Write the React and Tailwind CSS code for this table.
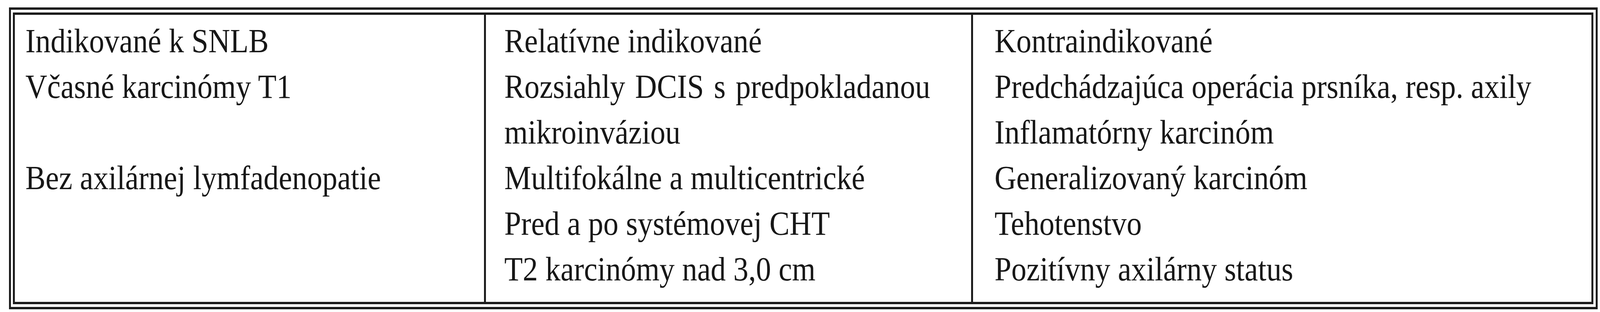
import React from "react";

// reference was drawn for a 4608px wide page; horizontal sizes are in vw so the
// table keeps its proportions at whatever width the window really has
const columns = [
  {
    width: "w-[29.318vw] shrink-0",
    pad: "pl-[0.651vw]",
    lines: ["Indikované k SNLB", "Včasné karcinómy T1", "", "Bez axilárnej lymfadenopatie"],
  },
  {
    width: "w-[30.425vw] shrink-0 border-l-[0.1302vw] border-[#1c1c1c]",
    pad: "pl-[1.15vw]",
    lines: [
      "Relatívne indikované",
      { text: "Rozsiahly DCIS s predpokladanou", justified: true },
      "mikroinváziou",
      "Multifokálne a multicentrické",
      "Pred a po systémovej CHT",
      "T2 karcinómy nad 3,0 cm",
    ],
  },
  {
    width: "flex-1 border-l-[0.1302vw] border-[#1c1c1c]",
    pad: "pl-[1.367vw]",
    lines: [
      "Kontraindikované",
      "Predchádzajúca operácia prsníka, resp. axily",
      "Inflamatórny karcinóm",
      "Generalizovaný karcinóm",
      "Tehotenstvo",
      "Pozitívny axilárny status",
    ],
  },
];

export default function App() {
  const fx = typeof window !== "undefined" ? Math.min(1, window.innerWidth / 4608) : 1;

  return (
    <div className="w-full h-[800px] bg-white pt-[19px] pl-[0.5642vw] pr-[0.1519vw] overflow-hidden">
      <div className="h-[774px] border-y-[6px] border-x-[0.1302vw] border-[#1c1c1c] py-[7px] pl-[0.1302vw] pr-[0.1519vw]">
        <div className="h-full border-y-[6px] border-x-[0.1302vw] border-[#1c1c1c] flex">
          {columns.map((col, i) => (
            <div key={i} className={`${col.width} h-full pt-[8px] ${col.pad} overflow-hidden`}>
              {col.lines.map((line, j) => {
                const text = typeof line === "string" ? line : line.text;
                const justified = typeof line !== "string" && line.justified;
                return (
                  <div
                    key={j}
                    className={`h-[117px] whitespace-nowrap text-[87px] leading-[117px] text-[#171717] origin-left ${
                      justified ? "[word-spacing:7px]" : ""
                    }`}
                    style={{
                      fontFamily: '"Liberation Serif", "Times New Roman", serif',
                      transform: `scaleX(${fx})`,
                    }}
                  >
                    {text}
                  </div>
                );
              })}
            </div>
          ))}
        </div>
      </div>
    </div>
  );
}
